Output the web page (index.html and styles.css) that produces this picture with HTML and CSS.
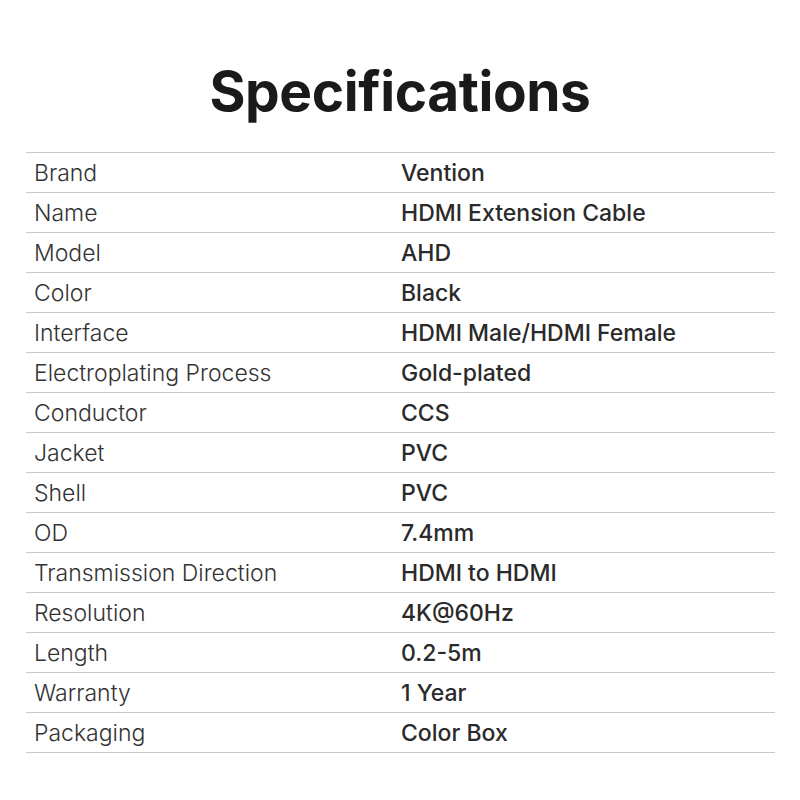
FILE: index.html
```html
<!DOCTYPE html>
<html>
<head>
<meta charset="utf-8">
<link rel="stylesheet" href="styles.css">
</head>
<body>
<div class="page">
  <h1 class="title">Specifications</h1>
  <div class="spec">
    <div class="row"><span class="k">Brand</span><span class="v">Vention</span></div>
    <div class="row"><span class="k">Name</span><span class="v">HDMI Extension Cable</span></div>
    <div class="row"><span class="k">Model</span><span class="v">AHD</span></div>
    <div class="row"><span class="k">Color</span><span class="v">Black</span></div>
    <div class="row"><span class="k">Interface</span><span class="v">HDMI Male/HDMI Female</span></div>
    <div class="row"><span class="k">Electroplating Process</span><span class="v">Gold-plated</span></div>
    <div class="row"><span class="k">Conductor</span><span class="v">CCS</span></div>
    <div class="row"><span class="k">Jacket</span><span class="v">PVC</span></div>
    <div class="row"><span class="k">Shell</span><span class="v">PVC</span></div>
    <div class="row"><span class="k">OD</span><span class="v">7.4mm</span></div>
    <div class="row"><span class="k">Transmission Direction</span><span class="v">HDMI to HDMI</span></div>
    <div class="row"><span class="k">Resolution</span><span class="v">4K@60Hz</span></div>
    <div class="row"><span class="k">Length</span><span class="v">0.2-5m</span></div>
    <div class="row"><span class="k">Warranty</span><span class="v">1 Year</span></div>
    <div class="row"><span class="k">Packaging</span><span class="v">Color Box</span></div>
  </div>
</div>
</body>
</html>
```
FILE: styles.css
```css
html, body {
  margin: 0;
  padding: 0;
  background: #ffffff;
}
.page {
  width: 800px;
  height: 800px;
  font-family: Inter, "Noto Sans", sans-serif;
  color: #222;
  display: flex;
  flex-direction: column;
  align-items: center;
}
.title {
  margin: 0;
  height: 152px;
  display: flex;
  align-items: center;
  justify-content: center;
  font-size: 55px;
  font-weight: 700;
  color: #1a1a1a;
  letter-spacing: -0.4px;
  padding-top: 30px;
  box-sizing: border-box;
}
.spec {
  width: 749px;
  margin-left: 1px;
  border-top: 1px solid #c8c8c8;
  display: flex;
  flex-direction: column;
}
.row {
  height: 39px;
  border-bottom: 1px solid #c8c8c8;
  display: grid;
  grid-template-columns: 375px 1fr;
  align-items: center;
  font-size: 23px;
}
.k {
  padding-left: 8px;
  font-weight: 300;
  color: #333;
}
.v {
  font-weight: 500;
  color: #2a2a2a;
}
```
